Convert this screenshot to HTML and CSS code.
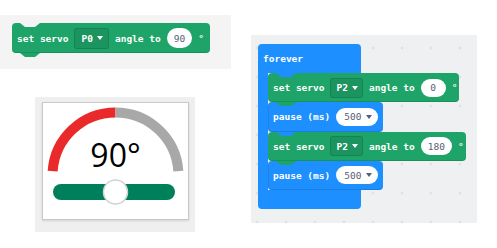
FILE: index.html
```html
<!DOCTYPE html>
<html>
<head>
<meta charset="utf-8">
<link rel="stylesheet" href="styles.css">
</head>
<body>
<div class="page">
  <div class="left-col">
    <div class="panel-top">
      <div class="block servo lone">
        <span class="lbl">set servo</span>
        <span class="dd">P0<i class="tri"></i></span>
        <span class="lbl">angle to</span>
        <span class="oval">90</span>
        <span class="lbl deg">°</span>
      </div>
    </div>
    <div class="panel-gauge">
      <div class="card">
        <svg class="gauge" width="145" height="116" viewBox="0 0 145 116">
          <path d="M 9.65 68.1 A 63 63 0 0 1 72.5 9.5" fill="none" stroke="#ea2a2a" stroke-width="10"/>
          <path d="M 72.5 9.5 A 63 63 0 0 1 135.35 68.1" fill="none" stroke="#a8a8a8" stroke-width="10"/>
          <text x="72.5" y="64" text-anchor="middle" class="gtext">90°</text>
          <rect x="10" y="81" width="122" height="16" rx="8" fill="#00805a"/>
          <circle cx="72.5" cy="89" r="12" fill="#ffffff" stroke="#d2d2d2" stroke-width="1.5"/>
        </svg>
      </div>
    </div>
  </div>
  <div class="panel-right">
    <div class="forever">
      <div class="hat"><span class="lbl">forever</span></div>
      <div class="c-body">
        <div class="arm"></div>
        <div class="stack">
          <div class="block servo in">
            <span class="lbl">set servo</span>
            <span class="dd">P2<i class="tri"></i></span>
            <span class="lbl">angle to</span>
            <span class="oval">0</span>
            <span class="lbl deg">°</span>
          </div>
          <div class="block pause">
            <span class="lbl">pause (ms)</span>
            <span class="oval wide">500<i class="tri dark"></i></span>
          </div>
          <div class="block servo in">
            <span class="lbl">set servo</span>
            <span class="dd">P2<i class="tri"></i></span>
            <span class="lbl">angle to</span>
            <span class="oval">180</span>
            <span class="lbl deg">°</span>
          </div>
          <div class="block pause">
            <span class="lbl">pause (ms)</span>
            <span class="oval wide">500<i class="tri dark"></i></span>
          </div>
        </div>
      </div>
      <div class="foot"></div>
    </div>
  </div>
</div>
</body>
</html>
```

FILE: styles.css
```css
html, body {
  margin: 0;
  padding: 0;
  background: #ffffff;
}

.page {
  display: flex;
  align-items: flex-start;
  font-family: "DejaVu Sans Mono", "Liberation Mono", monospace;
}

.left-col {
  display: flex;
  flex-direction: column;
  width: 231px;
  padding-top: 15px;
}

.panel-top {
  width: 231px;
  height: 54px;
  box-sizing: border-box;
  background: #f4f4f4;
  padding: 8px 0 0 12px;
  --notch: #f4f4f4;
}

.panel-gauge {
  width: 160px;
  height: 135px;
  margin: 28px 0 0 35px;
  box-sizing: border-box;
  background: #efefef;
  padding: 5px 0 0 7px;
}

.card {
  width: 147px;
  height: 118px;
  box-sizing: border-box;
  border: 1px solid #c9c9c9;
  background: #ffffff;
  box-shadow: 0 1px 2px rgba(0,0,0,0.12);
}

.gauge {
  display: block;
}

.gtext {
  font-family: "Open Sans", "Noto Sans", sans-serif;
  font-size: 32px;
  fill: #000000;
}

.panel-right {
  width: 226px;
  height: 188px;
  margin: 35px 0 0 20px;
  box-sizing: border-box;
  background-color: #eef0f2;
  background-image: radial-gradient(circle, #d6d9dd 0.9px, transparent 1.3px);
  background-size: 29px 29px;
  background-position: -8.5px -1.5px;
  padding: 9px 0 0 7px;
}

/* blocks */
.block {
  position: relative;
  display: inline-flex;
  align-items: center;
  box-sizing: border-box;
  height: 29.25px;
  border-radius: 4px;
  padding: 0 2px 0 5px;
  color: #ffffff;
  font-size: 9.5px;
  font-weight: bold;
  white-space: nowrap;
}

.block::before {
  content: "";
  position: absolute;
  top: 0;
  left: 8px;
  width: 20px;
  height: 4px;
  background: var(--notch);
  clip-path: polygon(0 0, 100% 0, 75% 100%, 25% 100%);
}

.block::after {
  content: "";
  position: absolute;
  top: 100%;
  left: 8px;
  width: 20px;
  height: 4px;
  background: var(--fill);
  clip-path: polygon(0 0, 100% 0, 75% 100%, 25% 100%);
  z-index: 2;
}

.servo {
  --fill: #1ea468;
  background: var(--fill);
  box-shadow: inset 0 -1px 0 rgba(0,0,0,0.12);
}

.servo.lone {
  height: 30px;
  width: 198px;
}

.servo.in {
  --notch: #1e8fff;
}

.pause {
  --fill: #1e8fff;
  --notch: #1ea468;
  background: var(--fill);
  box-shadow: inset 0 -1px 0 rgba(0,0,0,0.12), inset 1px 0 0 rgba(0,0,0,0.08);
  width: 115px;
}

.lbl {
  margin-right: 6px;
}

.deg {
  margin-left: 0;
  margin-right: 0;
}

.dd {
  display: inline-flex;
  align-items: center;
  height: 20px;
  box-sizing: border-box;
  padding: 0 4px 0 5px;
  margin: 0 6px 0 0;
  border: 1px solid rgba(0,0,0,0.12);
  border-radius: 3px;
  background: #1b9460;
}

.lone .dd {
  height: 21px;
  padding: 0 5px 0 6px;
}

.tri {
  display: inline-block;
  width: 0;
  height: 0;
  margin-left: 4px;
  border-left: 3.5px solid transparent;
  border-right: 3.5px solid transparent;
  border-top: 4px solid #ffffff;
}

.tri.dark {
  border-top-color: #575e75;
  margin-left: 5px;
}

.oval {
  display: inline-flex;
  align-items: center;
  justify-content: center;
  min-width: 25px;
  height: 18px;
  box-sizing: border-box;
  padding: 0 7px;
  margin-right: 6px;
  border-radius: 9px;
  background: #ffffff;
  color: #575e75;
  font-weight: normal;
}

.lone .oval {
  height: 20px;
  border-radius: 10px;
}

.oval.wide {
  padding: 0 6px 0 8px;
  margin-right: 0;
}

/* forever */
.forever {
  display: flex;
  flex-direction: column;
  align-items: flex-start;
  --fill: #1e8fff;
}

.hat {
  width: 103px;
  height: 29px;
  box-sizing: border-box;
  background: #1e8fff;
  border-radius: 4px 4px 0 0;
  display: flex;
  align-items: center;
  padding-left: 5px;
  color: #ffffff;
  font-size: 9.5px;
  font-weight: bold;
}

.c-body {
  display: flex;
}

.arm {
  width: 10px;
  background: #1e8fff;
}

.stack {
  display: flex;
  flex-direction: column;
  align-items: flex-start;
}

.foot {
  width: 103px;
  height: 19px;
  background: #1e8fff;
  border-radius: 0 0 4px 4px;
}
```
